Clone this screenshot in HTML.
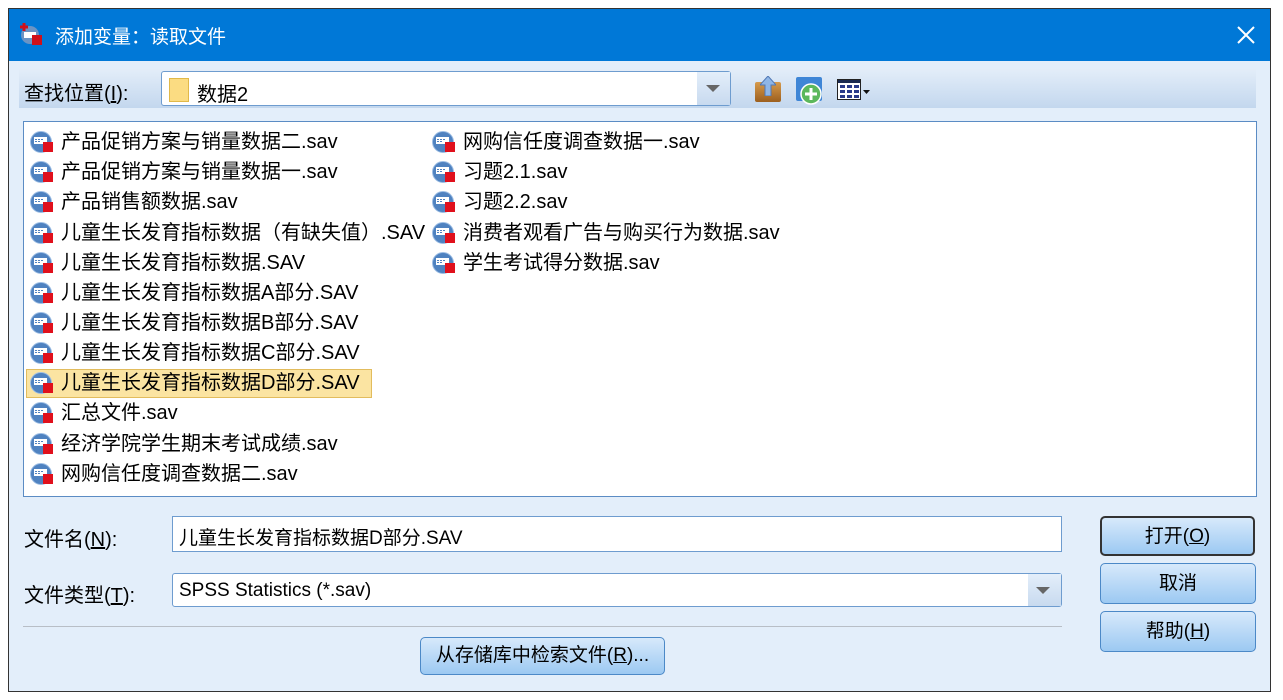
<!DOCTYPE html>
<html><head><meta charset="utf-8"><style>
*{margin:0;padding:0;box-sizing:border-box}
body{width:1283px;height:700px;background:#fff;font-family:"Liberation Sans","Noto Sans CJK SC",sans-serif;position:relative;overflow:hidden;color:#000}
.win{position:absolute;left:8px;top:8px;width:1263px;height:684px;border:1px solid #333;background:#e3eefa}
.title{position:absolute;left:0;top:0;right:0;height:52px;background:#0078d7;color:#fff;font-size:19px}
.title .t{position:absolute;left:46px;top:13px}
.abs{position:absolute}
.tb{left:10px;top:59px;width:1237px;height:40px;background:linear-gradient(#e4eef9,#c3d7ee)}
.box{background:#fff;border:1px solid #6e9ccf}
.list{left:14px;top:112px;width:1234px;height:376px;border:1px solid #5b8cc4;background:#fff}
.row{position:absolute;height:28px;font-size:20px;line-height:28px;white-space:nowrap}
.row .ic{position:absolute;left:0;top:3px;width:26px;height:24px}
.row span{position:absolute;left:31px}
.sel{background:#fbe4a2;border:1px solid #e2bc5d}
.btn{position:absolute;border:1px solid #4c89c7;border-radius:5px;background:linear-gradient(#d7e9fb,#9cc9f2);font-size:19px;text-align:center}
.lbl{font-size:20px}
</style></head><body>
<svg width="0" height="0" style="position:absolute"><defs><g id="fi"><circle cx="11" cy="11" r="10.5" fill="#4f82c0"/><circle cx="11" cy="11" r="10.5" fill="none" stroke="#9cbde4" stroke-width="1"/><rect x="4" y="6" width="13" height="7" fill="#fff"/><g fill="#4f82c0"><rect x="5" y="8" width="2" height="1"/><rect x="8" y="8" width="2" height="1"/><rect x="11" y="8" width="2" height="1"/><rect x="5" y="10" width="2" height="1"/><rect x="8" y="10" width="2" height="1"/></g><rect x="13" y="11" width="10" height="10" fill="#e0101c"/></g></defs></svg>
<div class="win">
 <div class="title">
  <svg class="abs" style="left:10px;top:12px" width="26" height="26" viewBox="0 0 26 26"><circle cx="11" cy="14" r="9" fill="#6c94c4"/><rect x="5" y="11" width="12" height="6" fill="#fff"/><rect x="13" y="14" width="10" height="10" fill="#d0101a"/><path d="M5 2v8M1 6h8" stroke="#d0101a" stroke-width="3"/></svg>
  <div class="t">添加变量：读取文件</div>
  <svg class="abs" style="left:1228px;top:17px" width="18" height="18"><path d="M1 1L17 17M17 1L1 17" stroke="#fff" stroke-width="2"/></svg>
 </div>
 <div class="abs tb"></div>
 <div class="abs lbl" style="left:15px;top:68px">查找位置(<u>I</u>):</div>
 <div class="abs box" style="left:152px;top:62px;width:570px;height:35px;border-radius:3px"></div>
 <div class="abs" style="left:688px;top:63px;width:33px;height:33px;background:linear-gradient(#e3eefa,#c8daef)"></div>
 <svg class="abs" style="left:697px;top:76px" width="14" height="8"><path d="M0 0h14L7 7z" fill="#666"/></svg>
 <div class="abs" style="left:160px;top:69px;width:20px;height:24px;background:#fbdc82;border:1px solid #e1b949"></div>
 <div class="abs lbl" style="left:188px;top:69px">数据2</div>
 <div class="abs" style="left:746px;top:73px;width:26px;height:20px;background:linear-gradient(#d69a4b,#9c5f1f);border-radius:2px"></div>
 <svg class="abs" style="left:751px;top:67px" width="16" height="20"><path d="M8 0L16 9H11V20H5V9H0z" fill="#8fb6e6" stroke="#5178b4"/></svg>
 <div class="abs" style="left:787px;top:68px;width:26px;height:24px;background:#3f86d6;border-radius:2px"></div>
 <svg class="abs" style="left:791px;top:74px" width="22" height="22"><circle cx="11" cy="11" r="10" fill="#5cb85c" stroke="#fff" stroke-width="1.5"/><path d="M11 5v12M5 11h12" stroke="#fff" stroke-width="3"/></svg>
 <svg class="abs" style="left:828px;top:70px" width="34" height="22"><rect x="0.5" y="0.5" width="23" height="20" fill="#fff" stroke="#222"/><rect x="1" y="1" width="22" height="3" fill="#1a2a50"/><g fill="#2a3b8a"><rect x="3" y="6" width="5" height="3"/><rect x="10" y="6" width="5" height="3"/><rect x="17" y="6" width="5" height="3"/><rect x="3" y="11" width="5" height="3"/><rect x="10" y="11" width="5" height="3"/><rect x="17" y="11" width="5" height="3"/><rect x="3" y="16" width="5" height="3"/><rect x="10" y="16" width="5" height="3"/><rect x="17" y="16" width="5" height="3"/></g><path d="M26 11h7l-3.5 4z" fill="#111"/></svg>

 <div class="abs list">
  <div class="row" style="left:6px;top:6px"><svg class="ic"><use href="#fi"/></svg><span>产品促销方案与销量数据二.sav</span></div>
  <div class="row" style="left:6px;top:36px"><svg class="ic"><use href="#fi"/></svg><span>产品促销方案与销量数据一.sav</span></div>
  <div class="row" style="left:6px;top:66px"><svg class="ic"><use href="#fi"/></svg><span>产品销售额数据.sav</span></div>
  <div class="row" style="left:6px;top:97px"><svg class="ic"><use href="#fi"/></svg><span>儿童生长发育指标数据（有缺失值）.SAV</span></div>
  <div class="row" style="left:6px;top:127px"><svg class="ic"><use href="#fi"/></svg><span>儿童生长发育指标数据.SAV</span></div>
  <div class="row" style="left:6px;top:157px"><svg class="ic"><use href="#fi"/></svg><span>儿童生长发育指标数据A部分.SAV</span></div>
  <div class="row" style="left:6px;top:187px"><svg class="ic"><use href="#fi"/></svg><span>儿童生长发育指标数据B部分.SAV</span></div>
  <div class="row" style="left:6px;top:217px"><svg class="ic"><use href="#fi"/></svg><span>儿童生长发育指标数据C部分.SAV</span></div>
  <div class="abs sel" style="left:2px;top:247px;width:346px;height:29px"></div>
  <div class="row" style="left:6px;top:247px"><svg class="ic"><use href="#fi"/></svg><span>儿童生长发育指标数据D部分.SAV</span></div>
  <div class="row" style="left:6px;top:277px"><svg class="ic"><use href="#fi"/></svg><span>汇总文件.sav</span></div>
  <div class="row" style="left:6px;top:308px"><svg class="ic"><use href="#fi"/></svg><span>经济学院学生期末考试成绩.sav</span></div>
  <div class="row" style="left:6px;top:338px"><svg class="ic"><use href="#fi"/></svg><span>网购信任度调查数据二.sav</span></div>
  <div class="row" style="left:408px;top:6px"><svg class="ic"><use href="#fi"/></svg><span>网购信任度调查数据一.sav</span></div>
  <div class="row" style="left:408px;top:36px"><svg class="ic"><use href="#fi"/></svg><span>习题2.1.sav</span></div>
  <div class="row" style="left:408px;top:66px"><svg class="ic"><use href="#fi"/></svg><span>习题2.2.sav</span></div>
  <div class="row" style="left:408px;top:97px"><svg class="ic"><use href="#fi"/></svg><span>消费者观看广告与购买行为数据.sav</span></div>
  <div class="row" style="left:408px;top:127px"><svg class="ic"><use href="#fi"/></svg><span>学生考试得分数据.sav</span></div>
 </div>

 <div class="abs lbl" style="left:15px;top:514px">文件名(<u>N</u>):</div>
 <div class="abs box" style="left:163px;top:507px;width:890px;height:36px;font-size:19px;padding:6px 0 0 6px">儿童生长发育指标数据D部分.SAV</div>
 <div class="abs lbl" style="left:15px;top:570px">文件类型(<u>T</u>):</div>
 <div class="abs box" style="left:163px;top:564px;width:890px;height:34px;font-size:19px;padding:6px 0 0 6px;border-radius:3px">SPSS Statistics (*.sav)</div>
 <div class="abs" style="left:1019px;top:565px;width:33px;height:32px;background:linear-gradient(#e3eefa,#c8daef)"></div>
 <svg class="abs" style="left:1027px;top:578px" width="14" height="8"><path d="M0 0h14L7 7z" fill="#666"/></svg>
 <div class="abs" style="left:14px;top:617px;width:1039px;height:1px;background:#b8bec6"></div>
 <div class="btn" style="left:411px;top:628px;width:245px;height:38px;line-height:36px">从存储库中检索文件(<u>R</u>)...</div>
 <div class="btn" style="left:1091px;top:507px;width:155px;height:40px;line-height:38px;border:2px solid #333">打开(<u>O</u>)</div>
 <div class="btn" style="left:1091px;top:554px;width:156px;height:41px;line-height:39px">取消</div>
 <div class="btn" style="left:1091px;top:602px;width:156px;height:41px;line-height:39px">帮助(<u>H</u>)</div>
</div>
</body></html>
